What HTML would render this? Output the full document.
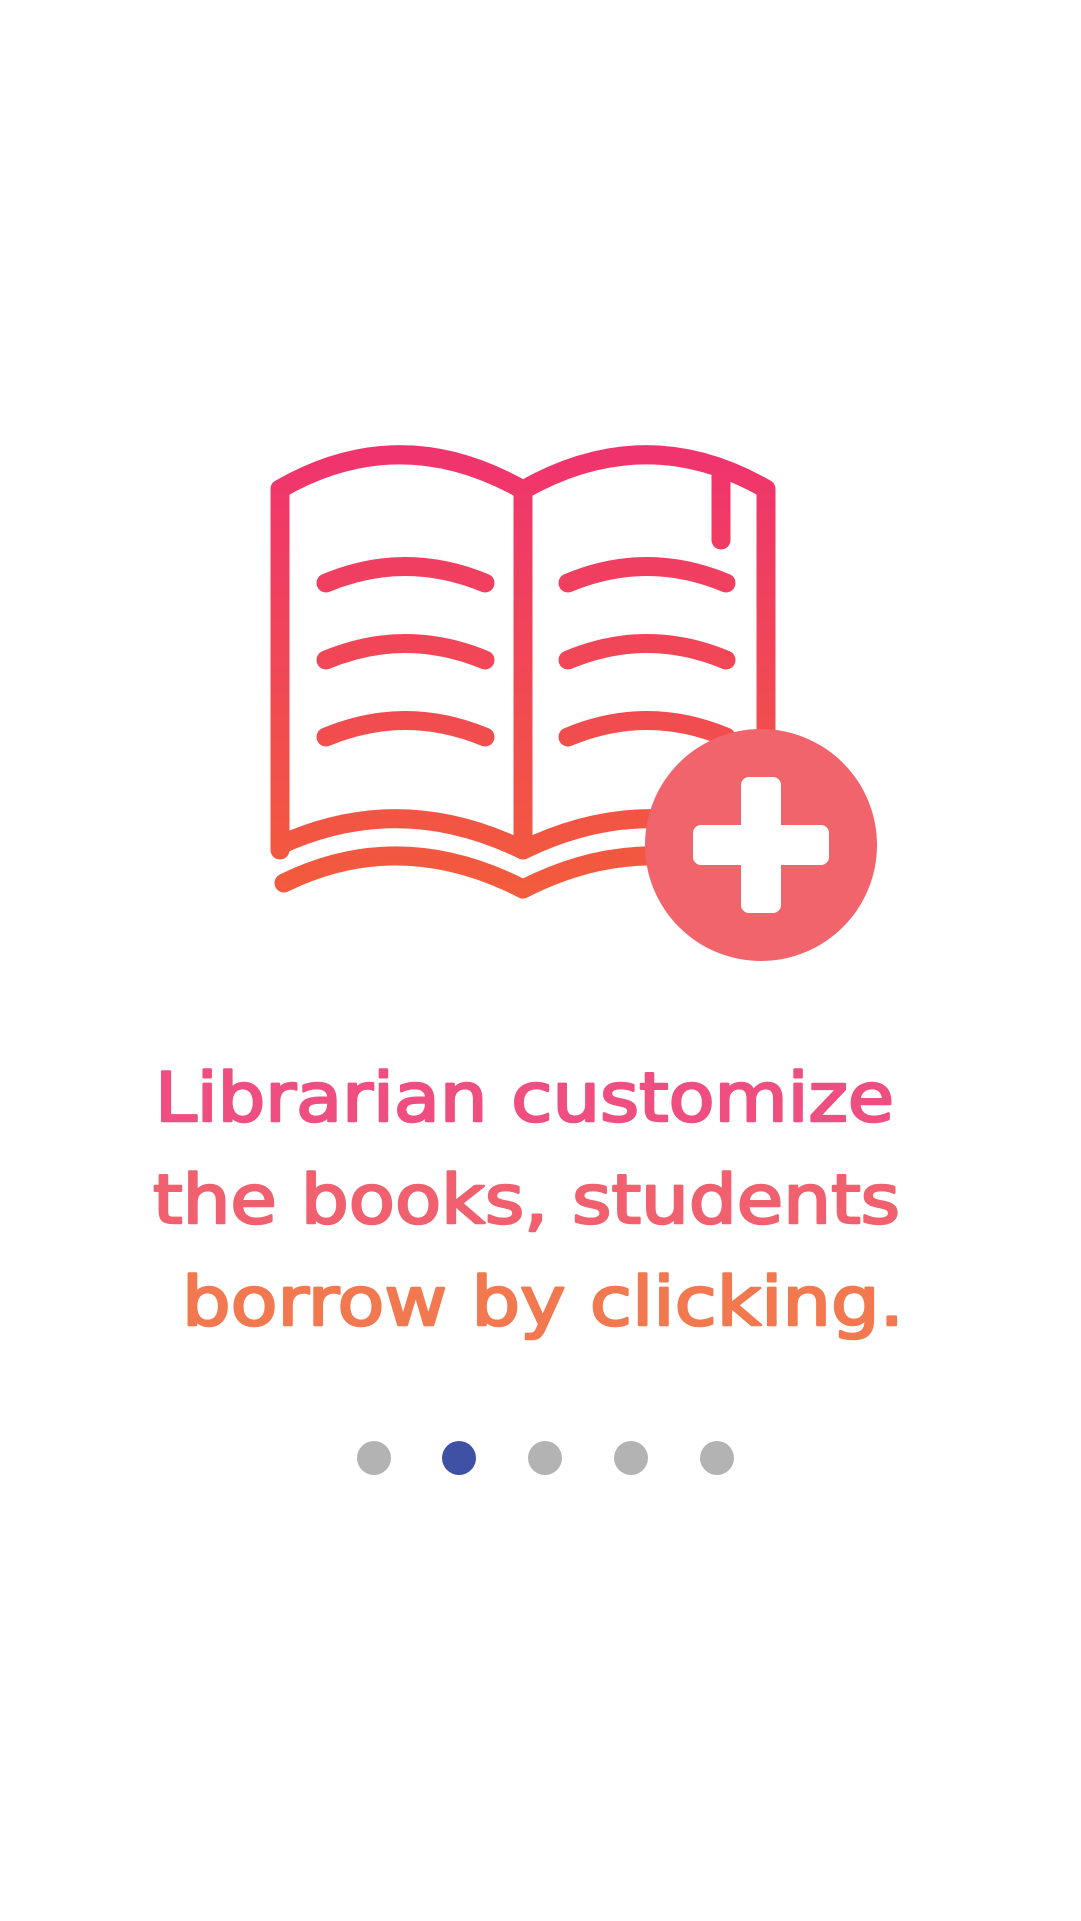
<!DOCTYPE html>
<html><head><meta charset="utf-8"><style>
html,body{margin:0;padding:0;background:#fff;width:1081px;height:1921px;overflow:hidden}
svg{display:block}
text{font-family:"Comic Sans MS","DejaVu Sans","Liberation Sans",sans-serif;font-size:68px;stroke-width:2.5;stroke-linejoin:round}
</style></head><body>
<svg width="1081" height="1921" viewBox="0 0 1081 1921">
<defs>
<linearGradient id="g" x1="0" y1="445" x2="0" y2="900" gradientUnits="userSpaceOnUse">
<stop offset="0" stop-color="#f0336f"/><stop offset="1" stop-color="#f25c3b"/>
</linearGradient>
</defs>
<g fill="none" stroke="url(#g)" stroke-width="19" stroke-linecap="round" stroke-linejoin="round">
<path d="M280 850 L280 489 Q400 420 523 490 Q646 420 766 489 L766 850"/>
<path d="M523 490 L523 850"/>
<path d="M280 845 Q400 790 523 850 Q646 790 766 845"/>
<path d="M284 883 Q400 826 523 889 Q646 826 766 883"/>
<path d="M721 473 L721 540"/>
<path d="M326 583 Q405 550 485 583"/>
<path d="M326 660 Q405 627 485 660"/>
<path d="M326 737 Q405 704 485 737"/>
<path d="M568 583 Q647 550 726 583"/>
<path d="M568 660 Q647 627 726 660"/>
<path d="M568 737 Q647 704 726 737"/>
</g>
<circle cx="761" cy="845" r="116" fill="#f2646b"/>
<rect x="741" y="777" width="40" height="136" rx="8" fill="#fff"/>
<rect x="693" y="825" width="136" height="40" rx="8" fill="#fff"/>
<text x="155" y="1121" fill="#ee4e80" stroke="#ee4e80" textLength="739" lengthAdjust="spacingAndGlyphs">Librarian customize</text>
<text x="153" y="1223" fill="#f0606e" stroke="#f0606e" textLength="747" lengthAdjust="spacingAndGlyphs">the books, students</text>
<text x="182" y="1325" fill="#f27850" stroke="#f27850" textLength="722" lengthAdjust="spacingAndGlyphs">borrow by clicking.</text>
<circle cx="374" cy="1458" r="17" fill="#b3b3b3"/>
<circle cx="459" cy="1458" r="17" fill="#3f51a5"/>
<circle cx="545" cy="1458" r="17" fill="#b3b3b3"/>
<circle cx="631" cy="1458" r="17" fill="#b3b3b3"/>
<circle cx="717" cy="1458" r="17" fill="#b3b3b3"/>
</svg>
</body></html>
